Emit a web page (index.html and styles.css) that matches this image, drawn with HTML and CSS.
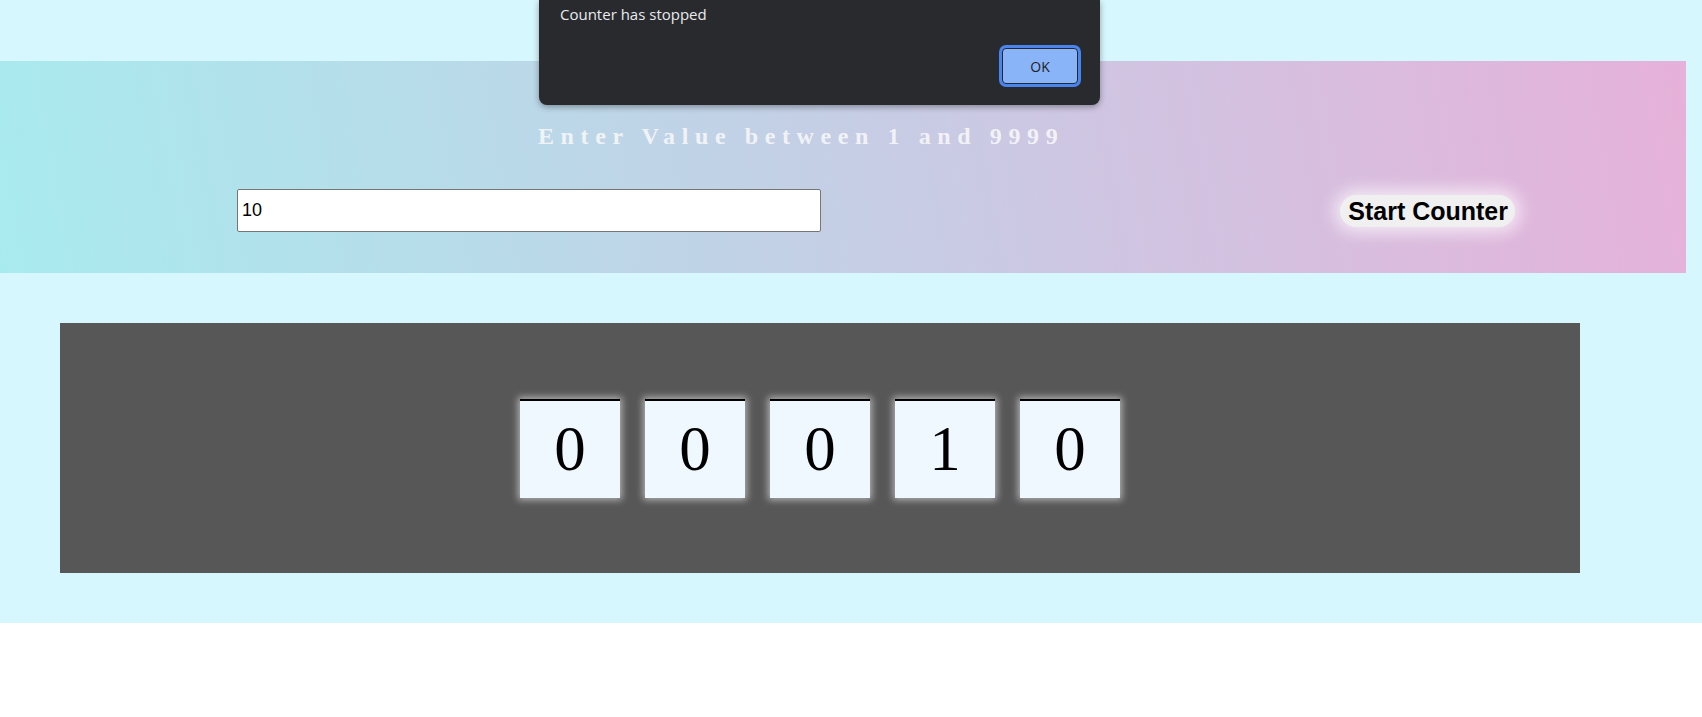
FILE: index.html
```html
<!DOCTYPE html>
<html>
<head>
<meta charset="utf-8">
<title>Counter</title>
<link rel="stylesheet" href="styles.css">
</head>
<body>
<div class="page">
  <section class="banner">
    <h2 class="title">Enter Value between 1 and 9999</h2>
    <div class="controls">
      <input class="value-input" type="text" value="10">
      <button class="start-btn">Start Counter</button>
    </div>
  </section>
  <section class="panel">
    <div class="digits">
      <div class="digit">0</div>
      <div class="digit">0</div>
      <div class="digit">0</div>
      <div class="digit">1</div>
      <div class="digit">0</div>
    </div>
  </section>
</div>
<div class="alert">
  <p class="alert-msg">Counter has stopped</p>
  <div class="alert-actions">
    <button class="alert-ok">OK</button>
  </div>
</div>
</body>
</html>
```
FILE: styles.css
```css
html, body {
  margin: 0;
  padding: 0;
  background: #ffffff;
}
body {
  width: 1702px;
  height: 717px;
  overflow: hidden;
  position: relative;
}
.page {
  background: #d6f7fd;
  padding: 61px 16px 50px 0;
}
.banner {
  height: 212px;
  box-sizing: border-box;
  padding-top: 61px;
  background: linear-gradient(80deg, #a8ebee 0%, #c5cee5 50%, #e6b1da 100%);
}
.title {
  margin: 0;
  padding-left: 538px;
  font-family: "Liberation Serif", "Times New Roman", serif;
  font-weight: bold;
  font-size: 24px;
  line-height: 28px;
  letter-spacing: 6.6px;
  color: rgba(246, 246, 248, 0.92);
  white-space: nowrap;
}
.controls {
  display: flex;
  align-items: center;
  justify-content: space-between;
  margin-top: 39px;
  padding: 0 171px 0 237px;
}
.value-input {
  width: 584px;
  height: 43px;
  box-sizing: border-box;
  margin: 0;
  padding: 0 4px;
  border: 1px solid #767676;
  border-radius: 2px;
  background: #ffffff;
  font-family: "Liberation Sans", Arial, sans-serif;
  font-size: 18px;
  color: #000;
}
.start-btn {
  height: 32px;
  margin: 0;
  padding: 0 7px 0 8px;
  border: none;
  border-radius: 16px;
  background: #f0f0f0;
  box-shadow: 0 0 16px 6px rgba(255, 255, 255, 0.65);
  font-family: "Liberation Sans", Arial, sans-serif;
  font-weight: bold;
  font-size: 25px;
  line-height: 32px;
  color: #000;
}
.panel {
  margin: 50px 0 0 60px;
  width: 1520px;
  height: 250px;
  background: #575757;
  display: flex;
  align-items: center;
  justify-content: center;
}
.digits {
  display: flex;
  gap: 25px;
}
.digit {
  width: 100px;
  height: 99px;
  box-sizing: border-box;
  border-top: 2px solid #000;
  background: #f0f8ff;
  box-shadow: 0 0 7px 2px rgba(255, 255, 255, 0.55);
  display: flex;
  align-items: center;
  justify-content: center;
  font-family: "Liberation Serif", "Times New Roman", serif;
  font-size: 63px;
  color: #000;
}
.alert {
  position: absolute;
  top: 0;
  left: 539px;
  width: 561px;
  height: 105px;
  box-sizing: border-box;
  background: #292a2d;
  border-radius: 0 0 8px 8px;
  box-shadow: 0 2px 6px rgba(0, 0, 0, 0.35);
  padding: 4px 22px 0 21px;
  display: flex;
  flex-direction: column;
}
.alert-msg {
  margin: 0;
  font-family: "Open Sans", "Noto Sans", sans-serif;
  font-size: 15px;
  line-height: 21px;
  color: #e8eaed;
}
.alert-actions {
  display: flex;
  justify-content: flex-end;
  margin-top: 23px;
}
.alert-ok {
  width: 76px;
  height: 36px;
  margin: 0;
  padding: 0;
  border: 1px solid #1e2a3c;
  border-radius: 4px;
  background: #8ab4f8;
  box-shadow: 0 0 0 3px #4a84ec;
  font-family: "Open Sans", "Noto Sans", sans-serif;
  font-size: 14px;
  color: #202124;
}
```
